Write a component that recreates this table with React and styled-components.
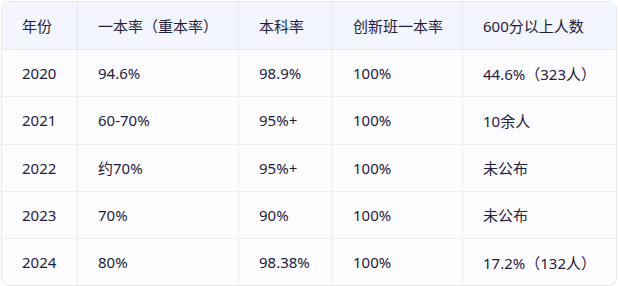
import styled, { createGlobalStyle } from "styled-components";

const GlobalStyle = createGlobalStyle`
  body {
    margin: 0;
    background: #ffffff;
    font-family: "Noto Sans", "Noto Sans CJK SC", sans-serif;
  }
  #root {
    padding: 1px 1px 0 1px;
  }
`;

const TableWrap = styled.div`
  border: 1px solid #e6e8f0;
  border-radius: 8px;
  overflow: hidden;
  background: #fdfdff;
`;

const Table = styled.table`
  width: 100%;
  border-collapse: separate;
  border-spacing: 0;
  table-layout: fixed;
  color: #1f2040;
  font-size: 15px;
`;

const HeadCell = styled.th`
  height: 47px;
  padding: 0 20px;
  text-align: left;
  font-weight: 400;
  background: #f3f6fe;
  border-bottom: 1px solid #e6e8f0;
  border-left: ${(p) => (p.$first ? "none" : "1px solid #e6e8f0")};
  white-space: nowrap;
`;

const Cell = styled.td`
  height: 46.25px;
  padding: 0 20px;
  border-bottom: ${(p) => (p.$last ? "none" : "1px solid #eceef4")};
  border-left: ${(p) => (p.$first ? "none" : "1px solid #eceef4")};
  white-space: nowrap;
`;

const columns = [
  { title: "年份", width: 75 },
  { title: "一本率（重本率）", width: 161 },
  { title: "本科率", width: 94 },
  { title: "创新班一本率", width: 130 },
  { title: "600分以上人数" },
];

const rows = [
  ["2020", "94.6%", "98.9%", "100%", "44.6%（323人）"],
  ["2021", "60-70%", "95%+", "100%", "10余人"],
  ["2022", "约70%", "95%+", "100%", "未公布"],
  ["2023", "70%", "90%", "100%", "未公布"],
  ["2024", "80%", "98.38%", "100%", "17.2%（132人）"],
];

const App = () => (
  <>
    <GlobalStyle />
    <TableWrap>
      <Table>
        <colgroup>
          {columns.map((c, i) => (
            <col key={i} style={c.width ? { width: c.width } : undefined} />
          ))}
        </colgroup>
        <thead>
          <tr>
            {columns.map((c, i) => (
              <HeadCell key={c.title} $first={i === 0}>
                {c.title}
              </HeadCell>
            ))}
          </tr>
        </thead>
        <tbody>
          {rows.map((r, ri) => (
            <tr key={r[0]}>
              {r.map((v, ci) => (
                <Cell key={ci} $first={ci === 0} $last={ri === rows.length - 1}>
                  {v}
                </Cell>
              ))}
            </tr>
          ))}
        </tbody>
      </Table>
    </TableWrap>
  </>
);

export default App;
